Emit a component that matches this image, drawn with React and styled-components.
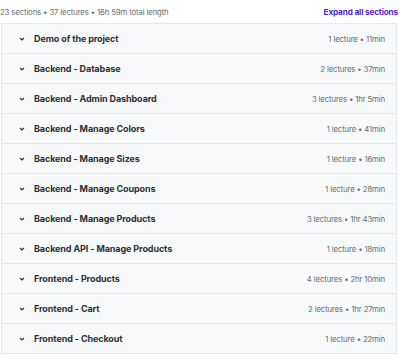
import React from 'react'
import styled, {createGlobalStyle} from 'styled-components'

const sections = [
  {title: 'Demo of the project', meta: '1 lecture • 11min'},
  {title: 'Backend - Database', meta: '2 lectures • 37min'},
  {title: 'Backend - Admin Dashboard', meta: '3 lectures • 1hr 5min'},
  {title: 'Backend - Manage Colors', meta: '1 lecture • 41min'},
  {title: 'Backend - Manage Sizes', meta: '1 lecture • 16min'},
  {title: 'Backend - Manage Coupons', meta: '1 lecture • 28min'},
  {title: 'Backend - Manage Products', meta: '3 lectures • 1hr 43min'},
  {title: 'Backend API - Manage Products', meta: '1 lecture • 18min'},
  {title: 'Frontend - Products', meta: '4 lectures • 2hr 10min'},
  {title: 'Frontend - Cart', meta: '2 lectures • 1hr 27min'},
  {title: 'Frontend - Checkout', meta: '1 lecture • 22min'},
]

function Chevron() {
  return (
    <svg width="8" height="8" viewBox="0 0 8 8">
      <path d="M2 3 L4 5 L6 3" fill="none" stroke="#2d2f31" strokeWidth="1.2" />
    </svg>
  )
}

function App() {
  return (
    <>
      <GlobalStyle />
      <Wrapper>
        <Header>
          <Summary>23 sections • 37 lectures • 16h 59m total length</Summary>
          <ExpandLink>Expand all sections</ExpandLink>
        </Header>
        <List>
          {sections.map((s, i) => (
            <Row key={i}>
              <Chevron />
              <Title>{s.title}</Title>
              <Meta>{s.meta}</Meta>
            </Row>
          ))}
        </List>
      </Wrapper>
    </>
  )
}

const GlobalStyle = createGlobalStyle`
  body {
    margin: 0;
    background: #fff;
    font-family: Inter, "Liberation Sans", sans-serif;
  }
`

const Wrapper = styled.div`
  width: 400px;
  height: 360px;
  overflow: hidden;
`

const Header = styled.div`
  display: flex;
  justify-content: space-between;
  align-items: center;
  height: 23px;
  padding: 0 2px 0 0;
`

const Summary = styled.span`
  font-size: 7.8px;
  letter-spacing: -0.15px;
  color: #6a6f73;
`

const ExpandLink = styled.span`
  font-size: 8.2px;
  font-weight: 700;
  letter-spacing: -0.15px;
  color: #5624d0;
`

const List = styled.div`
  margin-left: 1px;
  margin-right: 3px;
  border: 1px solid #e4e7ea;
  border-bottom: none;
`

const Row = styled.div`
  display: flex;
  align-items: center;
  height: 29px;
  padding: 0 11px 0 16px;
  background: #f7f9fa;
  border-bottom: 1px solid #e4e7ea;

  svg {
    flex-shrink: 0;
    margin-right: 8px;
  }
`

const Title = styled.span`
  flex: 1;
  font-size: 9px;
  font-weight: 700;
  letter-spacing: -0.1px;
  color: #2d2f31;
`

const Meta = styled.span`
  font-size: 7.8px;
  letter-spacing: -0.15px;
  color: #6a6f73;
`

export default App
